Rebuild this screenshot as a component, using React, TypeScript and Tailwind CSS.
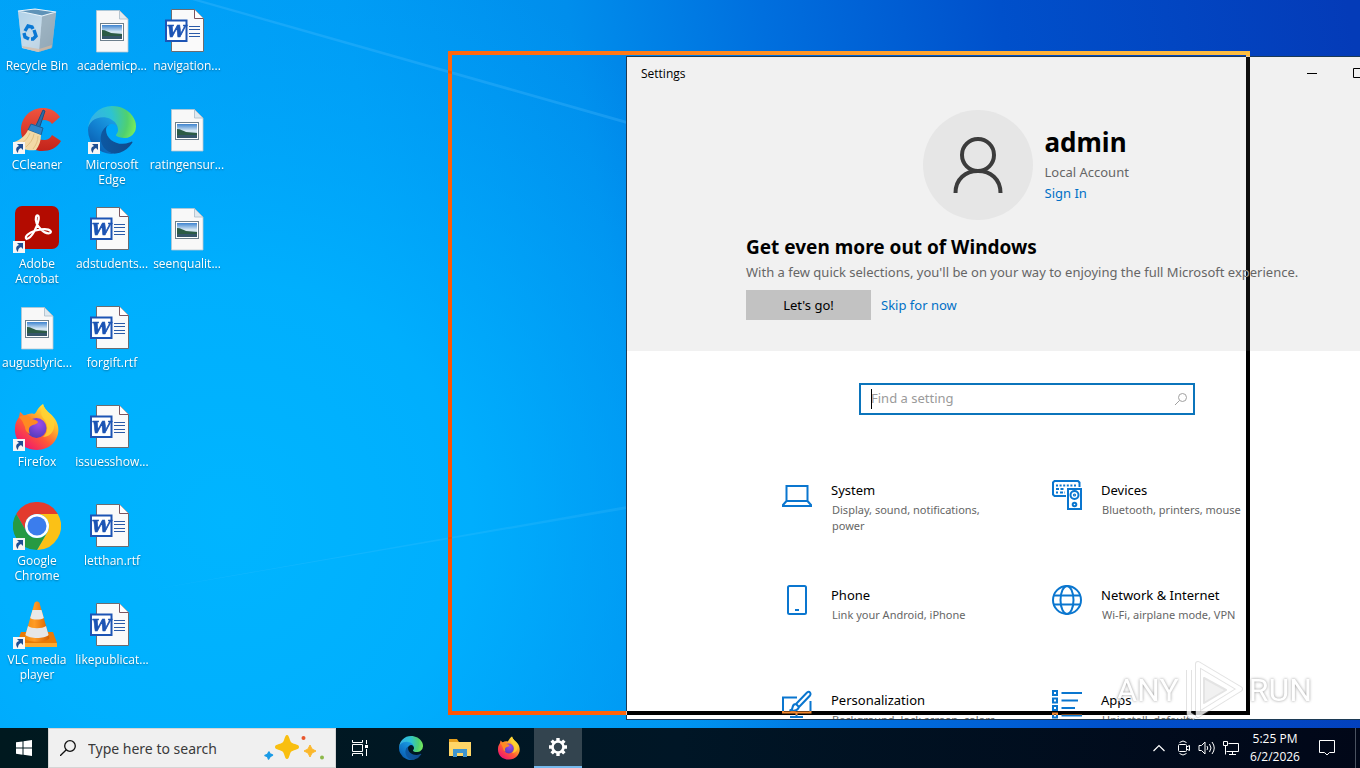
import React from 'react';

type IconProps = { className?: string };

const RecycleBin = () => (
    <svg viewBox="0 0 48 48" className="size-12">
        <defs>
            <linearGradient id="bin" x1="0" y1="0" x2="1" y2="1">
                <stop offset="0" stopColor="#7fb9e0" />
                <stop offset="0.5" stopColor="#c9d9e4" />
                <stop offset="1" stopColor="#9aa9b4" />
            </linearGradient>
        </defs>
        <path d="M5 4l17-2 21 3-4 36-14 4-16-4z" fill="url(#bin)" />
        <path d="M29 9l14-4-4 36-13 4z" fill="#8ea6b6" opacity="0.75" />
        <path d="M5 4l24 5-3 36-17-4z" fill="#c3dcec" opacity="0.7" />
        <path d="M9 39l17 3 13-4-1 3-13 4-15-4z" fill="#d7b9a0" opacity="0.7" />
        <path d="M5 4l17-2 21 3-14 4z" fill="#5f93b8" stroke="#e9f4fb" strokeWidth="1.2" />
        <g fill="none" stroke="#0a78d4" strokeWidth="3.4">
            <path d="M12 24l3-5 4 1 1 2" />
            <path d="M21 23l2 6-3 3h-2" />
            <path d="M16 32l-4-2-1-4" />
        </g>
    </svg>
);

const PictureFile = () => (
    <svg viewBox="0 0 48 48" className="size-12">
        <defs>
            <linearGradient id="photo" x1="0" y1="0" x2="0" y2="1">
                <stop offset="0" stopColor="#3d83cf" />
                <stop offset="0.5" stopColor="#dcebf5" />
                <stop offset="1" stopColor="#5d8da6" />
            </linearGradient>
        </defs>
        <path d="M8.500 3.500h23l8.500 8.500v33h-31.500z" fill="#f8f8f8" stroke="#b9c6cf" strokeWidth="0.8" />
        <path d="M31.500 3.500v8.500h8.500z" fill="#dfe9f0" stroke="#a9bac6" strokeWidth="0.8" />
        <rect x="12.500" y="16.500" width="23" height="17" fill="#fff" stroke="#6d7f8c" />
        <rect x="14" y="18" width="20" height="14" fill="url(#photo)" />
        <path d="M14 23c4 0 6 2 9 3l11 1v2H14z" fill="#2c5b45" />
        <path d="M14 29h20v3H14z" fill="#36566a" />
    </svg>
);

const WordFile = () => (
    <svg viewBox="0 0 48 48" className="size-12">
        <path d="M8.500 2.500h23l9 9v33h-32z" fill="#fafafa" stroke="#6c6c70" />
        <path d="M31.500 2.500v9h9" fill="#fff" stroke="#7b5560" />
        <path d="M26 19.500h11M26 22.500h11M26 26.500h11M26 29.500h11" stroke="#2a5aa8" />
        <rect x="3" y="13.500" width="20.500" height="20.500" fill="#fff" stroke="#1d54b4" strokeWidth="2" />
        <text x="13.200" y="30" textAnchor="middle" fontSize="17" fontWeight="bold" fontStyle="italic" fontFamily="DejaVu Serif, serif" fill="#1d54b4" stroke="#1d54b4" strokeWidth="0.6">W</text>
    </svg>
);

const CCleaner = () => (
    <svg viewBox="0 0 48 48" className="size-12">
        <defs>
            <linearGradient id="cc" x1="0" y1="0" x2="0" y2="1">
                <stop offset="0" stopColor="#f0543f" />
                <stop offset="1" stopColor="#c3231a" />
            </linearGradient>
        </defs>
        <path d="M47 11C42 4 36 2 30 2 17 2 8 12 8 24s9 21 21 21c8 0 15-3 19-10l-9-6c-2 4-5 5-8 5-7 0-10-5-10-10s4-10 10-10c3 0 6 1 8 4z" fill="url(#cc)" />
        <path d="M30 4l2 1-6 18-4-1z" fill="#2d6da8" stroke="#1d4e80" />
        <path d="M18 18l12 4-2 7-13-5z" fill="#2e86c9" stroke="#1d5f97" />
        <path d="M15 24l13 5c0 6-2 11-5 15-9 1-17-1-22-8 6-2 11-6 14-12z" fill="#f3d9a6" />
        <path d="M17 27c-2 5-5 8-9 11M21 28c-1 6-4 9-8 13M25 30c0 5-2 9-5 13" stroke="#e2c083" fill="none" />
    </svg>
);

const Edge = ({ className = 'size-12' }: IconProps) => (
    <svg viewBox="0 0 256 256" className={className}>
        <defs>
            <linearGradient id="edgeDark" x1="60" y1="177" x2="240" y2="177" gradientUnits="userSpaceOnUse">
                <stop offset="0" stopColor="#0c59a4" />
                <stop offset="1" stopColor="#114a8b" />
            </linearGradient>
            <linearGradient id="edgeBlue" x1="150" y1="90" x2="40" y2="220" gradientUnits="userSpaceOnUse">
                <stop offset="0" stopColor="#1b9de2" />
                <stop offset="0.5" stopColor="#1280d0" />
                <stop offset="1" stopColor="#0b62b4" />
            </linearGradient>
            <radialGradient id="edgeGreen" cx="26" cy="70" r="230" gradientUnits="userSpaceOnUse">
                <stop offset="0" stopColor="#35b1e6" />
                <stop offset="0.45" stopColor="#2dc3d2" />
                <stop offset="0.8" stopColor="#4fd070" />
                <stop offset="1" stopColor="#76eb5e" />
            </radialGradient>
        </defs>
        <path fill="url(#edgeDark)" d="M231 190.500a94 94 0 01-10.500 4.700 102 102 0 01-35.900 6.500c-47.300 0-88.500-32.600-88.500-74.300a31.500 31.500 0 0116.400-27.300c-42.800 1.800-53.800 46.400-53.800 72.500 0 73.900 68.100 81.400 82.800 81.400 7.900 0 19.800-2.300 27-4.600l1.300-.4a128.300 128.300 0 0066.600-52.800 4 4 0 00-5.400-5.700z" />
        <path fill="url(#edgeBlue)" d="M105.700 241.400a79.200 79.200 0 01-22.700-21.300 80.700 80.700 0 0129.500-120c3.100-1.500 8.500-4.100 15.600-4a32.400 32.400 0 0125.700 13 31.900 31.900 0 016.300 18.700c0-.2 24.500-79.600-80-79.600-43.900 0-80 41.600-80 78.200a130.200 130.200 0 0012.100 56 128 128 0 00156.400 67.100 75.600 75.600 0 01-62.800-8z" />
        <path fill="url(#edgeGreen)" d="M152.300 148.900c-.8 1-3.300 2.500-3.300 5.600 0 2.600 1.700 5.100 4.700 7.300 14.400 10 41.500 8.600 41.600 8.600a59.600 59.600 0 0030.300-8.300 61.400 61.400 0 0030.400-52.900c.3-22.400-8-37.300-11.300-43.900C223.500 23.800 177.700 0 128 0A128 128 0 000 126.200c.5-36.500 36.800-66 80-66 3.500 0 23.500.3 42 10a72.600 72.600 0 0130.900 29.200c6.200 10.700 7.200 24.200 7.200 29.600s-2.700 13.300-7.800 19.900z" />
    </svg>
);

const Acrobat = () => (
    <svg viewBox="0 0 48 48" className="size-12">
        <rect x="2" y="1" width="44" height="43" rx="7" fill="#b30b00" />
        <path d="M13.500 34c-2.500-2 2-6.500 9-8.500 6-1.500 13-2 15 .5 2 2.500-4 4-9-1-4-4-6.500-9-5.500-13 1-3 3.500-2 2.500 3-1 6-6.500 18.500-12 19z" fill="none" stroke="#fff" strokeWidth="2.200" />
    </svg>
);

const Firefox = ({ className = 'size-12' }: IconProps) => (
    <svg viewBox="0 0 48 48" className={className}>
        <defs>
            <linearGradient id="ffBody" x1="0.85" y1="0.1" x2="0.2" y2="0.95">
                <stop offset="0" stopColor="#fff044" />
                <stop offset="0.3" stopColor="#ffb02a" />
                <stop offset="0.6" stopColor="#ff5a36" />
                <stop offset="1" stopColor="#f0146f" />
            </linearGradient>
            <radialGradient id="ffGlobe" cx="0.6" cy="0.3" r="0.8">
                <stop offset="0" stopColor="#a04be8" />
                <stop offset="1" stopColor="#4a3bb8" />
            </radialGradient>
        </defs>
        <path d="M30 1c2 7 8 9 12 15 9 14-1 31-18 31C10 47 1 37 2 25c0-5 2-8 4-11l1-5c2 1 3 3 4 4 3-2 7-3 10-2 3-1 2-5 9-10z" fill="url(#ffBody)" />
        <circle cx="23.500" cy="25" r="10" fill="url(#ffGlobe)" />
        <path d="M6 14c6-3 10-2 13 2 3 1 5 1 6 3-1 3-5 2-7 4-2 1-3 4-1 8-3-1-5-4-5-7-2-4-2-6-6-10z" fill="#ff8a22" />
        <path d="M30 1c-2 8-3 11 1 15 4 5 5 13-1 18 9 0 13-9 11-18-4-6-9-8-11-15z" fill="#ffd233" opacity="0.85" />
    </svg>
);

const Chrome = () => (
    <svg viewBox="0 0 48 48" className="size-12">
        <path d="M3.200 12a24 24 0 0141.600 0H24a12 12 0 00-10.400 18z" fill="#e33b2e" />
        <path d="M44.800 12A24 24 0 0124 48l10.400-18A12 12 0 0024 12z" fill="#fbc116" />
        <path d="M24 48A24 24 0 013.200 12l10.400 18a12 12 0 0020.800 0z" fill="#269a42" />
        <circle cx="24" cy="24" r="12" fill="#fff" />
        <circle cx="24" cy="24" r="9.500" fill="#3b7ded" />
    </svg>
);

const Vlc = () => (
    <svg viewBox="0 0 48 48" className="size-12">
        <defs>
            <linearGradient id="cone" x1="0" y1="0" x2="1" y2="0">
                <stop offset="0" stopColor="#f08a10" />
                <stop offset="0.4" stopColor="#ff9b24" />
                <stop offset="1" stopColor="#d65f00" />
            </linearGradient>
        </defs>
        <path d="M8 31h32l4 11v3H4v-3z" fill="#e97a06" />
        <path d="M4 42h40v4H4z" fill="#ffa92b" />
        <path d="M21.500 2c1-2 4-2 5 0l10 35c-3 5-22 5-25 0z" fill="url(#cone)" />
        <path d="M19.500 9h9l2.300 8c-3 2-11 2-13.600 0z" fill="#e9e9e9" />
        <path d="M15 25c4 3 14 3 18 0l2.600 9c-4 4-19 4-23.200 0z" fill="#e6e6e6" />
    </svg>
);

const ShortcutBadge = () => (
    <svg viewBox="0 0 12 12" className="absolute bottom-0 left-0 size-3">
        <path d="M0 0h12v12H0z" fill="#f6f6f6" />
        <path d="M4 2h6v6L8 6C6 7 5 8 5 11 2 8 3 5 6 4z" fill="#1f4f93" />
    </svg>
);

const desktopItems = [
    { label: 'Recycle Bin', icon: <RecycleBin /> },
    { label: 'CCleaner', icon: <CCleaner />, shortcut: true },
    { label: 'Adobe Acrobat', icon: <Acrobat />, shortcut: true },
    { label: 'augustlyric...', icon: <PictureFile /> },
    { label: 'Firefox', icon: <Firefox />, shortcut: true },
    { label: 'Google Chrome', icon: <Chrome />, shortcut: true },
    { label: 'VLC media player', icon: <Vlc />, shortcut: true },
    { label: 'academicp...', icon: <PictureFile /> },
    { label: 'Microsoft Edge', icon: <Edge />, shortcut: true },
    { label: 'adstudents...', icon: <WordFile /> },
    { label: 'forgift.rtf', icon: <WordFile /> },
    { label: 'issuesshow...', icon: <WordFile /> },
    { label: 'letthan.rtf', icon: <WordFile /> },
    { label: 'likepublicat...', icon: <WordFile /> },
    { label: 'navigation...', icon: <WordFile /> },
    { label: 'ratingensur...', icon: <PictureFile /> },
    { label: 'seenqualit...', icon: <PictureFile /> },
];

function LineIcon({ children }: { children: React.ReactNode }) {
    return (
        <svg viewBox="0 0 30 30" className="size-[30px] shrink-0" fill="none" stroke="#0a76cf" strokeWidth="2">
            {children}
        </svg>
    );
}

const categories = [
    {
        title: 'System',
        text: 'Display, sound, notifications, power',
        icon: (
            <LineIcon>
                <path d="M4.500 6h21v15h-21zM4.500 21L1 25v1h28v-1l-3.500-4" />
            </LineIcon>
        ),
    },
    {
        title: 'Devices',
        text: 'Bluetooth, printers, mouse',
        icon: (
            <LineIcon>
                <path d="M14 16H2.500L1 14.500V2.500L2.500 1H26l1.500 1.500V7" />
                <path d="M4 5.500h20" strokeDasharray="2 1.600" />
                <path d="M4 9h8M4 12.500h2M8 12.500h5" strokeDasharray="3 1.500" />
                <rect x="16" y="9" width="13" height="20" />
                <circle cx="22.500" cy="15" r="4" />
                <circle cx="22.500" cy="15" r="0.600" />
                <circle cx="22.500" cy="24.500" r="1.800" />
            </LineIcon>
        ),
    },
    {
        title: 'Phone',
        text: 'Link your Android, iPhone',
        icon: (
            <LineIcon>
                <rect x="6" y="1" width="18" height="28" rx="1.500" />
                <path d="M13 25h4" />
            </LineIcon>
        ),
    },
    {
        title: 'Network & Internet',
        text: 'Wi-Fi, airplane mode, VPN',
        icon: (
            <LineIcon>
                <circle cx="15" cy="15" r="14" />
                <ellipse cx="15" cy="15" rx="6.500" ry="14" />
                <path d="M2 10.500h26M2 19.500h26" />
            </LineIcon>
        ),
    },
    {
        title: 'Personalization',
        text: 'Background, lock screen, colors',
        icon: (
            <LineIcon>
                <path d="M15 7.500H1v15h27.500V11M14.500 23v4M8 27h13" />
                <path d="M14 14L25 2.500q2-1.500 3 0t0 3L17 17zM14 14q-3 0-3.500 3.500T7.500 20q7 2.500 9.500-3z" />
            </LineIcon>
        ),
    },
    {
        title: 'Apps',
        text: 'Uninstall, defaults',
        icon: (
            <LineIcon>
                <path d="M1 1h4v4H1zM1 8.500h4v4H1zM1 16h4v4H1zM1 23.500h4v4H1z" />
                <path d="M9.500 3H30M9.500 10.500H26M9.500 18H23M9.500 25.500H30" />
            </LineIcon>
        ),
    },
];

function Wallpaper() {
    return (
        <svg className="absolute inset-0 h-full w-full" viewBox="0 0 1360 728" preserveAspectRatio="none">
            <defs>
                <linearGradient id="wall" x1="0" y1="300" x2="1360" y2="80" gradientUnits="userSpaceOnUse">
                    <stop offset="0" stopColor="#00a4f8" />
                    <stop offset="0.28" stopColor="#009bf4" />
                    <stop offset="0.44" stopColor="#008eec" />
                    <stop offset="0.58" stopColor="#006fde" />
                    <stop offset="0.75" stopColor="#0050cb" />
                    <stop offset="1" stopColor="#043bb8" />
                </linearGradient>
                <radialGradient id="glow" cx="230" cy="520" r="600" gradientUnits="userSpaceOnUse">
                    <stop offset="0" stopColor="#00b5ff" />
                    <stop offset="0.4" stopColor="#00b2ff" stopOpacity="0.85" />
                    <stop offset="1" stopColor="#00a4fb" stopOpacity="0" />
                </radialGradient>
            </defs>
            <path d="M0 0h1360v728H0z" fill="url(#wall)" />
            <path d="M0 0h1360v728H0z" fill="url(#glow)" />
            <path d="M200 0L627 121V124L192 0z" fill="#5cc4ff" opacity="0.25" />
            <path d="M627 506L150 590l477-81z" fill="#6ad0ff" opacity="0.15" />
        </svg>
    );
}

function SettingsWindow() {
    return (
        <section className="absolute top-14 bottom-2 left-[626px] flex w-[802px] flex-col overflow-hidden border border-[#1c3a55] bg-white text-black">
            <div className="shrink-0 bg-[#f1f1f1] pb-[31px]">
                <header className="flex h-8 items-center justify-between pl-3.5">
                    <span className="pt-0.5 font-['Open_Sans',sans-serif] text-xs">Settings</span>
                    <div className="flex">
                        <button aria-label="Minimize" className="flex h-8 w-[46px] items-center justify-center">
                            <svg viewBox="0 0 10 10" className="size-2.5" stroke="#000"><path d="M0 5.500h10" /></svg>
                        </button>
                        <button aria-label="Maximize" className="flex h-8 w-[46px] items-center justify-center">
                            <svg viewBox="0 0 10 10" className="size-2.5" stroke="#000" fill="none"><path d="M.5.5h9v9h-9z" /></svg>
                        </button>
                        <button aria-label="Close" className="flex h-8 w-[46px] items-center justify-center">
                            <svg viewBox="0 0 10 10" className="size-2.5" stroke="#000"><path d="M0 0l10 10M10 0L0 10" /></svg>
                        </button>
                    </div>
                </header>

                <div className="mt-[21px] flex justify-center gap-3">
                    <div className="flex size-[110px] items-center justify-center rounded-full bg-[#e6e6e6]">
                        <svg viewBox="0 0 56 56" className="size-14" fill="none" stroke="#3c3c3c" strokeWidth="4">
                            <circle cx="28" cy="18" r="16" />
                            <path d="M5.500 56c0-14 10-22 22.500-22s22.500 8 22.500 22" />
                        </svg>
                    </div>
                    <div className="flex min-w-[87px] flex-col items-start pt-3">
                        <h1 className="text-[26px] leading-10 font-bold">admin</h1>
                        <p className="text-[13px] leading-5 text-[#666]">Local Account</p>
                        <a href="#signin" className="text-[13px] leading-[22px] text-[#0070c6]">Sign In</a>
                    </div>
                </div>

                <div className="mt-3.5 pl-[119px]">
                    <h2 className="text-[19px] leading-[26px] font-bold">Get even more out of Windows</h2>
                    <p className="text-[13px] leading-6 text-[#666]">
                        With a few quick selections, you'll be on your way to enjoying the full Microsoft experience.
                    </p>
                    <div className="mt-1.5 flex items-center gap-2.5 text-[13px]">
                        <button className="h-[30px] w-[125px] bg-[#c2c2c2] pt-0.5">Let's go!</button>
                        <a href="#skip" className="pt-0.5 text-[#0070c6]">Skip for now</a>
                    </div>
                </div>
            </div>

            <label className="relative mt-8 flex h-8 w-[336px] shrink-0 items-center self-center border-2 border-[#0b74bb] pr-1.5">
                <span className="absolute left-2.5 h-5 w-px bg-black" />
                <input
                    type="text"
                    aria-label="Find a setting"
                    placeholder="Find a setting"
                    className="min-w-0 flex-1 pl-2.5 text-[13px] outline-none placeholder:text-[#9a9a9a]"
                />
                <svg viewBox="0 0 12 12" className="size-3" fill="none" stroke="#a0a0a0"><circle cx="7.500" cy="4.500" r="4" /><path d="M4.500 7.500L0 12" /></svg>
            </label>

            <nav className="mt-[50px] grid w-[540px] shrink-0 auto-rows-[105px] grid-cols-2 self-center">
                {categories.map((c) => (
                    <a key={c.title} href={`#${c.title}`} className="flex gap-[19px] px-[25px] pt-[15px]">
                        {c.icon}
                        <span>
                            <span className="block text-[13px] leading-5">{c.title}</span>
                            <span className="block w-[170px] pt-0.5 pl-px text-[11px] leading-4 text-[#666]">{c.text}</span>
                        </span>
                    </a>
                ))}
            </nav>
        </section>
    );
}

function Watermark() {
    return (
        <div className="pointer-events-none absolute right-12 bottom-2 flex items-center gap-1.5 font-['Roboto',sans-serif] text-[32px] leading-[60px] text-white opacity-80 [text-shadow:0_0_3px_#777]">
            <span>ANY</span>
            <svg viewBox="0 0 58 60" className="h-15 w-[58px]" fill="none" strokeLinejoin="round">
                <path d="M13 4l42 25-42 26z" stroke="#999" strokeWidth="6" opacity="0.35" />
                <path d="M4 10v44l6 4" stroke="#999" strokeWidth="6" opacity="0.35" />
                <path d="M13 4l42 25-42 26zM4 10v44l6 4" stroke="#fff" strokeWidth="4" />
                <path d="M19 18l22 12-22 13z" stroke="#bbb" strokeWidth="2" fill="#ddd" opacity="0.5" />
            </svg>
            <span>RUN</span>
        </div>
    );
}

const Sparkles = () => (
    <svg viewBox="0 0 62 30" className="h-[30px] w-[62px]">
        <path d="M24 2c1.500 0 2 2 3 5s2 3 5 4 4 1.500 4 3-1 2-4 3-4 1-5 4-1.500 5-3 5-2-2-3-5-2-3-5-4-4-1.500-4-3 1-2 4-3 4-1 5-4 1.500-5 3-5z" fill="#f9bf10" />
        <path d="M47 12l2 4 4 2-4 2-2 4-2-4-4-2 4-2z" fill="#fbb82c" stroke="#fbb82c" strokeLinejoin="round" />
        <path d="M6 19l1 2 2.500 1-2.500 1.500L5.500 26l-1-2.500L2 22.500l2.500-1z" fill="#1b9be6" stroke="#1b9be6" strokeLinejoin="round" strokeWidth="1.500" />
        <circle cx="40.500" cy="5" r="2" fill="#e8562d" />
        <circle cx="59" cy="24.500" r="2" fill="#8cb84a" />
    </svg>
);

const Folder = () => (
    <svg viewBox="0 0 22 20" className="h-5 w-[22px]">
        <path d="M0 1h8l2 3h11v14H0z" fill="#e59e1c" />
        <path d="M0 4h22v14H0z" fill="#ffd667" />
        <path d="M4 19v-8h14v8h-4v-4H8v4z" fill="#3f95cf" />
    </svg>
);

const Gear = () => (
    <svg viewBox="0 0 20 20" className="size-5" fill="none" stroke="#fff">
        <circle cx="10" cy="10" r="5.500" strokeWidth="2.600" />
        {[0, 45, 90, 135].map((deg) => (
            <path key={deg} d="M10 1v3M10 16v3" strokeWidth="3.400" transform={`rotate(${deg} 10 10)`} />
        ))}
    </svg>
);

function Taskbar() {
    return (
        <footer className="flex h-10 shrink-0 bg-linear-to-r from-[#00191f] via-[#001626] to-[#010718] text-white">
            <button aria-label="Start" className="flex w-12 items-center justify-center">
                <svg viewBox="0 0 16 16" className="size-4" fill="#fff">
                    <path d="M0 2.300L6.500 1.400v6.200H0zM7.500 1.200L16 0v7.600H7.500zM0 8.500h6.500v6.200L0 13.800zM7.500 8.500H16V16l-8.500-1.200z" />
                </svg>
            </button>
            <label className="flex w-[288px] items-center border border-[#d5d5d5] bg-[#f0f0f0] pr-2.5 pl-[11px]">
                <svg viewBox="0 0 16 16" className="size-4" fill="none" stroke="#111" strokeWidth="1.300"><circle cx="10" cy="6" r="5.300" /><path d="M6.300 9.700L0 16" /></svg>
                <input
                    type="text"
                    aria-label="Type here to search"
                    placeholder="Type here to search"
                    className="min-w-0 flex-1 pt-0.5 pl-3 text-sm outline-none placeholder:text-[#3a3a3a]"
                />
                <Sparkles />
            </label>
            <div className="flex gap-px">
                <button aria-label="Task View" className="mr-0.5 flex w-12 items-center justify-center">
                    <svg viewBox="0 0 16 16" className="size-4" fill="none" stroke="#fff">
                        <path d="M.5 0v2.500h10V0M.5 16v-2.500h10V16M.5 4.500h10v7H.5zM14.500 0v4M14.500 9v7" />
                        <path d="M13 5h3v3h-3z" fill="#fff" stroke="none" />
                    </svg>
                </button>
                <button aria-label="Microsoft Edge" className="flex w-12 items-center justify-center"><Edge className="size-6" /></button>
                <button aria-label="File Explorer" className="flex w-12 items-center justify-center"><Folder /></button>
                <button aria-label="Firefox" className="flex w-12 items-center justify-center"><Firefox className="size-6" /></button>
                <button aria-label="Settings" className="flex w-12 items-center justify-center border-b-2 border-[#76b9ed] bg-[#33444f]"><Gear /></button>
            </div>

            <div className="ml-auto flex items-center">
                <button aria-label="Show hidden icons" className="flex w-6 justify-center">
                    <svg viewBox="0 0 12 8" className="h-2 w-3" fill="none" stroke="#fff" strokeWidth="1.200"><path d="M.5 7L6 1.500 11.500 7" /></svg>
                </button>
                <button aria-label="Meet Now" className="flex w-6 justify-center">
                    <svg viewBox="0 0 16 16" className="size-4" fill="none" stroke="#fff">
                        <rect x="3.500" y="4.500" width="8" height="7" rx="1" />
                        <path d="M11.500 7l3-1.500v5l-3-1.500M4.500 2.500q3.500-3 7 0M4.500 13.500q3.500 3 7 0" />
                    </svg>
                </button>
                <button aria-label="Volume" className="flex w-6 justify-center">
                    <svg viewBox="0 0 18 16" className="h-4 w-[18px]" fill="none" stroke="#fff">
                        <path d="M1 5.500h2.500L7 2v12l-3.500-3.500H1zM9 6q1.500 2 0 4M11.500 4q3 4 0 8M14 2q4.500 6 0 12" />
                    </svg>
                </button>
                <button aria-label="Network" className="flex w-6 justify-center">
                    <svg viewBox="0 0 16 16" className="size-4" fill="none" stroke="#fff">
                        <path d="M5.500 3.500h10v8h-12M9.500 11.500v3M6 14.500h7M.5 1.500h4v4h-4zM2.500 5.500v9" />
                    </svg>
                </button>
                <time className="w-16 text-center font-['Open_Sans',sans-serif] text-xs leading-[18px]">5:25 PM<br />6/2/2026</time>
                <button aria-label="Notifications" className="flex w-12 justify-center pr-2">
                    <svg viewBox="0 0 16 16" className="size-4" fill="none" stroke="#fff"><path d="M.5.5h15v12h-5L8 15l-2.500-2.500h-5z" /></svg>
                </button>
                <button aria-label="Show desktop" className="h-10 w-[5px] border-l border-[#4a5260]" />
            </div>
        </footer>
    );
}

export default function App() {
    return (
        <div className="flex h-screen flex-col overflow-hidden font-['Noto_Sans','Open_Sans',sans-serif]">
            <main className="relative min-h-0 flex-1 overflow-hidden">
                <Wallpaper />
                <ul className="relative grid w-max auto-cols-[74px] grid-flow-col grid-rows-[repeat(7,99px)] gap-x-px pt-[7px]">
                    {desktopItems.map((item) => (
                        <li key={item.label}>
                            <button className="flex w-full flex-col items-center text-white">
                                <span className="relative">
                                    {item.icon}
                                    {item.shortcut && <ShortcutBadge />}
                                </span>
                                <span className="mt-[3px] px-0.5 font-['Open_Sans',sans-serif] text-xs leading-[15px] [text-shadow:0_1px_2px_#0006]">{item.label}</span>
                            </button>
                        </li>
                    ))}
                </ul>
                <SettingsWindow />
                {/* selection frame inverts whatever is under it */}
                <div className="pointer-events-none absolute top-[51px] bottom-[13px] left-[448px] w-[802px] border-4 border-white mix-blend-difference" />
                <Watermark />
            </main>
            <Taskbar />
        </div>
    );
}
